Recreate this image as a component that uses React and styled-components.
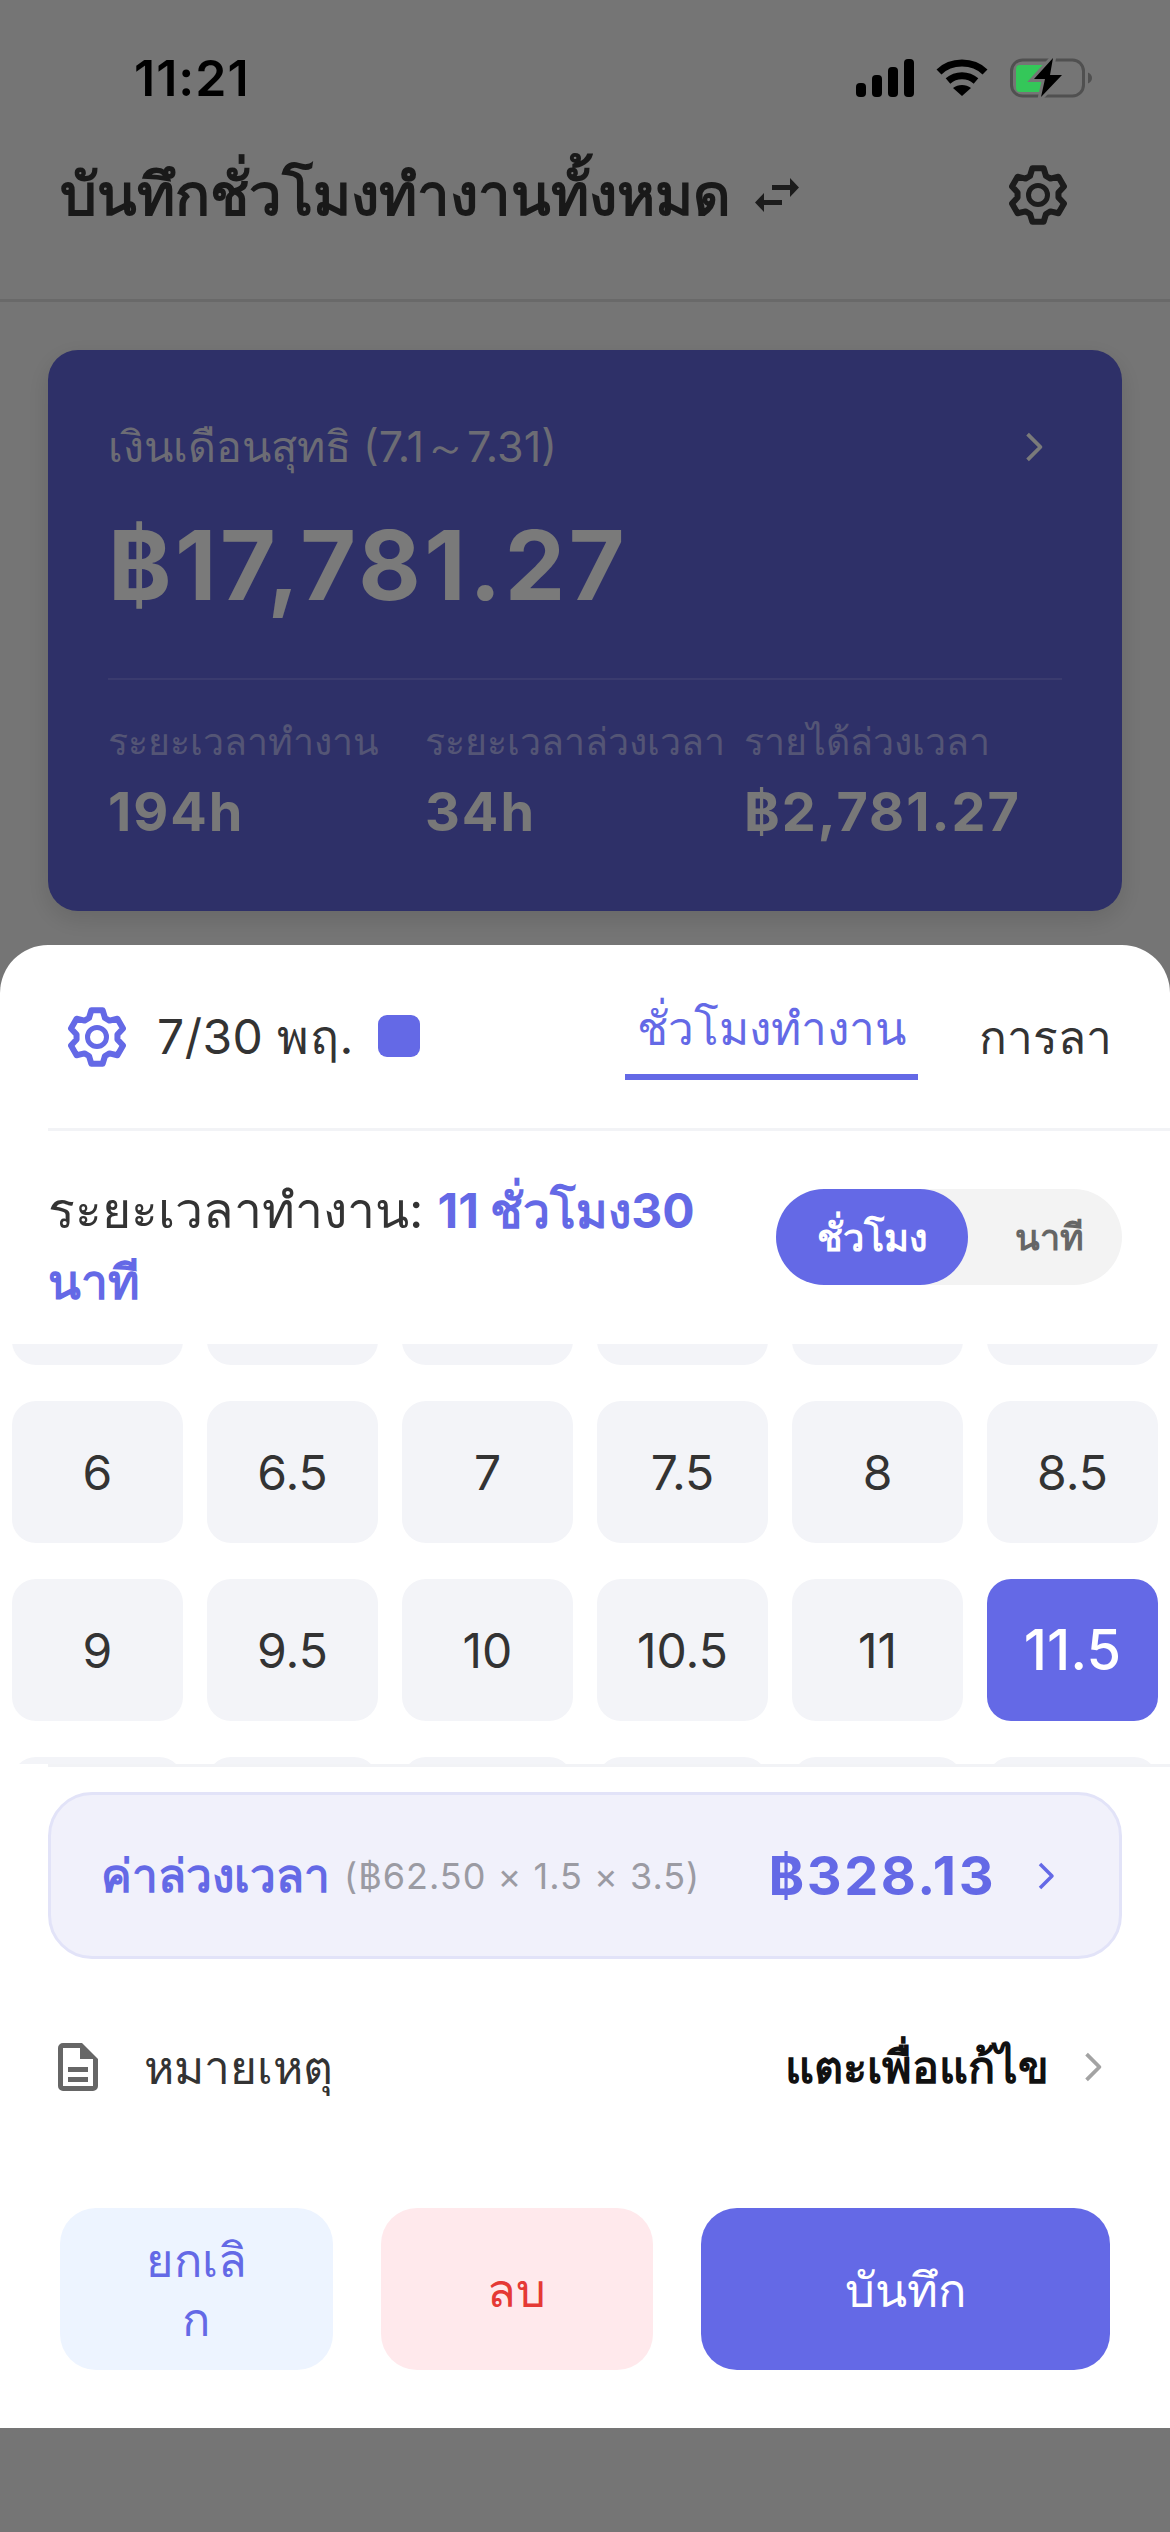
import React from "react";
import styled, { createGlobalStyle } from "styled-components";

const primary = "#6469e6";
const font = `Inter, "Noto Sans", "Liberation Sans", sans-serif`;

// first and last row only peek out of the scroll window, their labels are out of view
const hourRows = [
  [null, null, null, null, null, null],
  [6, 6.5, 7, 7.5, 8, 8.5],
  [9, 9.5, 10, 10.5, 11, 11.5],
  [null, null, null, null, null, null],
];
const selectedHour = 11.5;

// six flat teeth round a 60x60 box
function gearPath() {
  const points = [];
  for (let i = 0; i < 6; i++) {
    const a = ((-90 + i * 60) * Math.PI) / 180;
    const dx = Math.cos(a);
    const dy = Math.sin(a);
    const at = (r, w) => `${(30 + dx * r - dy * w).toFixed(2)} ${(30 + dy * r + dx * w).toFixed(2)}`;
    points.push(at(19, -8), at(26.8, -5.6), at(26.8, 5.6), at(19, 8));
  }
  return `M${points.join("L")}Z`;
}

function GearIcon({ size, color }) {
  return (
    <svg width={size} height={size} viewBox="0 0 60 60" fill="none" stroke={color} strokeWidth="6" strokeLinejoin="round">
      <path d={gearPath()} />
      <circle cx="30" cy="30" r="9.5" strokeWidth="5" />
    </svg>
  );
}

function Chevron({ width, height, color, strokeWidth = 2 }) {
  return (
    <svg width={width} height={height} viewBox="0 0 18 28" fill="none" stroke={color} strokeWidth={strokeWidth} strokeLinejoin="round">
      <path d="M3 2l12 12L3 26" />
    </svg>
  );
}

const boltPath = "M43 0L24 21H35L31 39L52 17H40Z";

function App() {
  return (
    <>
      <GlobalStyle />
      <Screen>
        <StatusBar>
          <Clock>11:21</Clock>
          <StatusIcons>
            <svg width="58" height="38" viewBox="0 0 58 38" fill="#000">
              <rect x="0" y="24" width="10" height="14" rx="4" />
              <rect x="16" y="16" width="10" height="22" rx="4" />
              <rect x="32" y="8" width="10" height="30" rx="4" />
              <rect x="48" y="0" width="10" height="38" rx="4" />
            </svg>
            <svg width="52" height="38" viewBox="0 0 52 38" fill="none" stroke="#000">
              <path d="M3 13C15 1 37 1 49 13" strokeWidth="7" />
              <path d="M12 22c8-7 20-7 28 0" strokeWidth="7" />
              <path d="M26 37l-9-8c5-4 13-4 18 0z" fill="#000" stroke="none" />
            </svg>
            <svg width="82" height="40" viewBox="0 0 82 40" fill="none">
              <rect x="1.5" y="2" width="72" height="36" rx="11" stroke="#505050" strokeWidth="3" />
              <path d="M6 11a4 4 0 014-4h23v27H10a4 4 0 01-4-4z" fill="#34c759" />
              <path d="M78 14.5c2.5 1 4 3 4 5.500s-1.500 4.500-4 5.500z" fill="#505050" />
              <path d={boltPath} fill="#757575" stroke="#757575" strokeWidth="6" />
              <path d={boltPath} fill="#000" />
            </svg>
          </StatusIcons>
        </StatusBar>

        <Header>
          <TitleGroup>
            <Title>บันทึกชั่วโมงทำงานทั้งหมด</Title>
            <svg width="47" height="36" viewBox="0 0 47 36" fill="#383838">
              <rect x="19" y="8" width="19" height="5" />
              <path d="M37 1l9 9.500L37 20z" />
              <rect x="11" y="23" width="18" height="5" />
              <path d="M11 16l-9 9.500L11 35z" />
            </svg>
          </TitleGroup>
          <GearIcon size={60} color="#383838" />
        </Header>

        <SalaryCard>
          <CardTop>
            <CardLabel>เงินเดือนสุทธิ (7.1～7.31)</CardLabel>
            <Chevron width={20} height={30} color="#f4f4f4" strokeWidth={3.5} />
          </CardTop>
          <CardAmount>฿17,781.27</CardAmount>
          <CardDivider />
          <Stats>
            <Stat>
              <StatLabel>ระยะเวลาทำงาน</StatLabel>
              <StatValue>194h</StatValue>
            </Stat>
            <Stat>
              <StatLabel>ระยะเวลาล่วงเวลา</StatLabel>
              <StatValue>34h</StatValue>
            </Stat>
            <Stat>
              <StatLabel>รายได้ล่วงเวลา</StatLabel>
              <StatValue>฿2,781.27</StatValue>
            </Stat>
          </Stats>
        </SalaryCard>

        <Backdrop />

        <Sheet>
          <SheetHead>
            <DateGroup>
              <GearIcon size={60} color={primary} />
              <DateText>7/30 พฤ.</DateText>
              <ColorDot />
            </DateGroup>
            <Tabs>
              <Tab $active>ชั่วโมงทำงาน</Tab>
              <Tab>การลา</Tab>
            </Tabs>
          </SheetHead>

          <DurationRow>
            <Duration>
              ระยะเวลาทำงาน: <strong>11 ชั่วโมง30 นาที</strong>
            </Duration>
            <UnitToggle>
              <UnitOption $active>ชั่วโมง</UnitOption>
              <UnitOption>นาที</UnitOption>
            </UnitToggle>
          </DurationRow>

          <HourViewport>
            <HourGrid>
              {hourRows.flat().map((hour, i) => (
                <HourCell key={i} $selected={hour === selectedHour}>
                  {hour}
                </HourCell>
              ))}
            </HourGrid>
          </HourViewport>

          <SheetBody>
            <OvertimeCard>
              <OvertimeLabel>ค่าล่วงเวลา</OvertimeLabel>
              <OvertimeFormula>(฿62.50 × 1.5 × 3.5)</OvertimeFormula>
              <OvertimeAmount>฿328.13</OvertimeAmount>
              <Chevron width={18} height={28} color={primary} strokeWidth={3.5} />
            </OvertimeCard>

            <NoteRow>
              <svg width="40" height="48" viewBox="0 0 40 48" fill="#666">
                <path
                  fillRule="evenodd"
                  d="M5 0H24L40 16V43a5 5 0 01-5 5H5a5 5 0 01-5-5V5a5 5 0 015-5zM5 5V43H35V16H22V5z"
                />
                <rect x="10" y="24" width="20" height="5" />
                <rect x="10" y="34" width="20" height="5" />
              </svg>
              <NoteLabel>หมายเหตุ</NoteLabel>
              <NoteAction>แตะเพื่อแก้ไข</NoteAction>
              <Chevron width={20} height={30} color="#a3a3a3" strokeWidth={3.5} />
            </NoteRow>

            <Actions>
              <ActionButton $bg="#edf4ff" $color={primary}>ยกเลิก</ActionButton>
              <ActionButton $bg="#ffe9ec" $color="#e53935">ลบ</ActionButton>
              <ActionButton $bg={primary} $color="#fff">บันทึก</ActionButton>
            </Actions>
          </SheetBody>
        </Sheet>
      </Screen>
    </>
  );
}

const GlobalStyle = createGlobalStyle`
  html, body {
    margin: 0;
    padding: 0;
    background: #ebebeb;
  }
  body {
    font-family: ${font};
  }
`;

const Screen = styled.div`
  position: relative;
  width: 1170px;
  height: 2532px;
  overflow: hidden;
  background: #ebebeb;
`;

const StatusBar = styled.div`
  position: relative;
  z-index: 1;
  height: 156px;
  padding: 0 78px 0 134px;
  box-sizing: border-box;
  display: flex;
  justify-content: space-between;
  align-items: center;
`;

const Clock = styled.div`
  font-size: 50px;
  font-weight: 600;
  letter-spacing: 1px;
  color: #000;
`;

const StatusIcons = styled.div`
  display: flex;
  align-items: center;
  gap: 22px;
`;

const Header = styled.div`
  height: 146px;
  padding: 0 102px 66px 60px;
  box-sizing: border-box;
  display: flex;
  justify-content: space-between;
  align-items: center;
  border-bottom: 3px solid #d2d2d2;
`;

const TitleGroup = styled.div`
  display: flex;
  align-items: center;
  gap: 22px;
`;

const Title = styled.h1`
  margin: 0;
  font-size: 58px;
  font-weight: 700;
  color: #333;
`;

const SalaryCard = styled.div`
  margin: 48px 48px 0;
  height: 561px;
  padding: 63px 60px 0;
  box-sizing: border-box;
  border-radius: 30px;
  background: #5c60d0;
  box-shadow: 0 8px 24px rgba(0, 0, 0, 0.12);
`;

const CardTop = styled.div`
  display: flex;
  justify-content: space-between;
  align-items: center;
  padding-right: 18px;
`;

const CardLabel = styled.div`
  font-size: 43px;
  color: #d8d8e8;
`;

const CardAmount = styled.div`
  margin-top: 26px;
  font-size: 96px;
  font-weight: 700;
  letter-spacing: 3.5px;
  color: #f4f4f4;
`;

const CardDivider = styled.div`
  margin-top: 55px;
  height: 2px;
  background: #7477dc;
`;

const Stats = styled.div`
  margin-top: 32px;
  display: grid;
  grid-template-columns: 317px 319px 1fr;
`;

const Stat = styled.div`
  display: flex;
  flex-direction: column;
  gap: 7px;
`;

const StatLabel = styled.div`
  font-size: 37.5px;
  color: #a8aaea;
  white-space: nowrap;
`;

const StatValue = styled.div`
  font-size: 54px;
  font-weight: 700;
  letter-spacing: 2px;
  color: #f0f0f0;
`;

const Backdrop = styled.div`
  position: absolute;
  inset: 0;
  background: rgba(0, 0, 0, 0.5);
`;

const Sheet = styled.div`
  position: absolute;
  top: 945px;
  left: 0;
  right: 0;
  height: 1483px;
  background: #fff;
  border-radius: 48px 48px 0 0;
`;

const SheetHead = styled.div`
  margin-left: 48px;
  height: 186px;
  padding: 40px 46px 0 19px;
  box-sizing: border-box;
  display: flex;
  justify-content: space-between;
  align-items: flex-start;
  border-bottom: 3px solid #f2f3f6;
`;

const DateGroup = styled.div`
  display: flex;
  align-items: center;
  height: 104px;
`;

const DateText = styled.div`
  margin-left: 30px;
  font-size: 48px;
  letter-spacing: 0.5px;
  color: #333;
`;

const ColorDot = styled.div`
  margin-left: 24px;
  width: 42px;
  height: 42px;
  border-radius: 9px;
  background: ${primary};
  position: relative;
  top: -1px;
`;

const Tabs = styled.div`
  display: flex;
  align-items: flex-start;
  gap: 49px;
`;

const Tab = styled.div`
  padding: 0 12px;
  height: 95px;
  box-sizing: border-box;
  font-size: 46px;
  line-height: ${(p) => (p.$active ? "86px" : "104px")};
  color: ${(p) => (p.$active ? primary : "#333")};
  border-bottom: ${(p) => (p.$active ? `6px solid ${primary}` : "none")};
`;

const DurationRow = styled.div`
  height: 213px;
  padding: 58px 48px 0;
  box-sizing: border-box;
  display: flex;
  justify-content: space-between;
  align-items: flex-start;
`;

const Duration = styled.div`
  width: 660px;
  margin-top: -14px;
  font-size: 50px;
  line-height: 70px;
  color: #333;
  strong {
    font-size: 48px;
    color: ${primary};
    font-weight: 700;
  }
`;

const UnitToggle = styled.div`
  width: 346px;
  height: 96px;
  border-radius: 48px;
  background: #f3f3f3;
  display: flex;
`;

const UnitOption = styled.div`
  width: ${(p) => (p.$active ? "192px" : "154px")};
  padding-left: ${(p) => (p.$active ? "0" : "8px")};
  box-sizing: border-box;
  border-radius: 48px;
  display: flex;
  justify-content: center;
  align-items: center;
  font-size: ${(p) => (p.$active ? "38px" : "36px")};
  font-weight: 700;
  color: ${(p) => (p.$active ? "#fff" : "#666")};
  background: ${(p) => (p.$active ? primary : "transparent")};
`;

const HourViewport = styled.div`
  height: 420px;
  padding: 0 12px;
  overflow: hidden;
`;

const HourGrid = styled.div`
  margin-top: -121px;
  display: grid;
  grid-template-columns: repeat(6, 171px);
  grid-auto-rows: 142px;
  column-gap: 24px;
  row-gap: 36px;
`;

const HourCell = styled.div`
  border-radius: 24px;
  display: flex;
  justify-content: center;
  align-items: center;
  font-size: ${(p) => (p.$selected ? "56px" : "48px")};
  font-weight: ${(p) => (p.$selected ? 500 : 400)};
  color: ${(p) => (p.$selected ? "#fff" : "#333")};
  background: ${(p) => (p.$selected ? primary : "#f3f4f8")};
`;

const SheetBody = styled.div`
  margin-left: 48px;
  padding: 25px 48px 0 0;
  border-top: 3px solid #f2f3f6;
`;

const OvertimeCard = styled.div`
  height: 167px;
  padding: 0 64px 0 50px;
  box-sizing: border-box;
  border: 3px solid #e2e3f8;
  border-radius: 44px;
  background: #f1f1fb;
  display: flex;
  align-items: center;
`;

const OvertimeLabel = styled.div`
  font-size: 46px;
  font-weight: 700;
  color: ${primary};
`;

const OvertimeFormula = styled.div`
  margin-left: 14px;
  font-size: 36px;
  letter-spacing: 1px;
  color: #9b9ba3;
`;

const OvertimeAmount = styled.div`
  margin-left: auto;
  margin-right: 41px;
  font-size: 54px;
  font-weight: 700;
  letter-spacing: 2.5px;
  color: ${primary};
`;

const NoteRow = styled.div`
  height: 100px;
  margin-top: 58px;
  padding: 0 19px 0 10px;
  display: flex;
  align-items: center;
`;

const NoteLabel = styled.div`
  margin-left: 46px;
  font-size: 46px;
  color: #333;
`;

const NoteAction = styled.div`
  margin-left: auto;
  margin-right: 34px;
  font-size: 45px;
  font-weight: 700;
  color: #111;
`;

const Actions = styled.div`
  margin: 91px 12px 0;
  display: grid;
  grid-template-columns: 2fr 2fr 3fr;
  gap: 48px;
`;

const ActionButton = styled.div`
  height: 162px;
  padding: 0 80px;
  box-sizing: border-box;
  border-radius: 36px;
  display: flex;
  justify-content: center;
  align-items: center;
  text-align: center;
  font-size: 47px;
  line-height: 59px;
  overflow-wrap: anywhere;
  color: ${(p) => p.$color};
  background: ${(p) => p.$bg};
`;

export default App;
